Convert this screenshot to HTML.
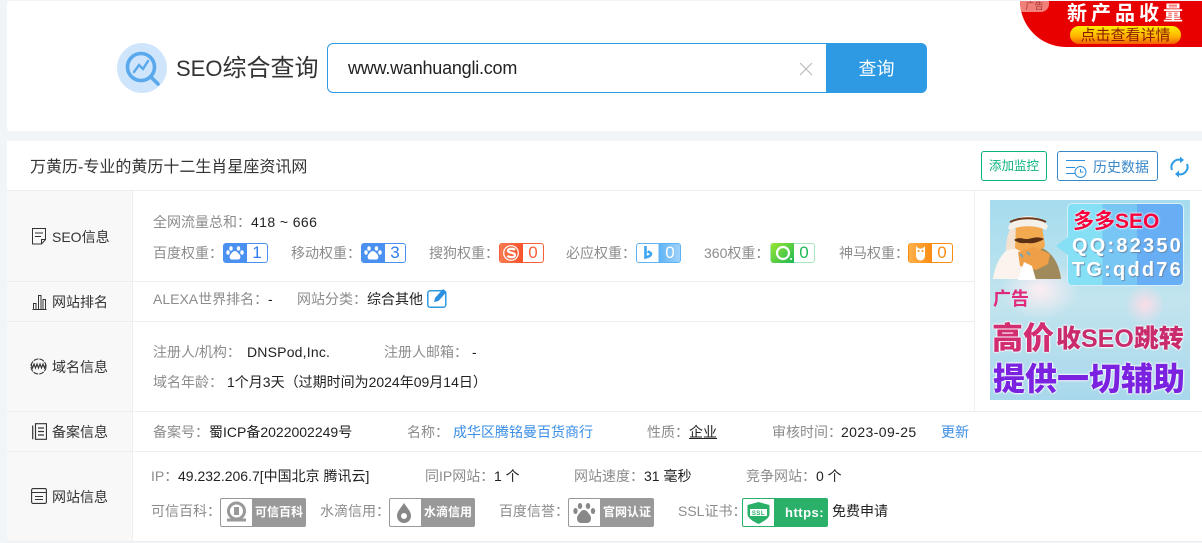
<!DOCTYPE html>
<html lang="zh-CN"><head><meta charset="utf-8"><title>SEO综合查询</title>
<style>
html,body{margin:0;padding:0;width:1202px;height:543px;overflow:hidden;background:#f1f5f8}
body{position:relative;font:14px/22px "Liberation Sans","Noto Sans CJK SC",sans-serif;color:#222}
div,span,svg{position:absolute;box-sizing:border-box}
span.n{position:static}
.t{white-space:nowrap;height:22px;line-height:22px}
.g{color:#8c8c8c}
.l{font-size:14px;color:#333}
.ln{background:#eee}
.bd{height:20px;width:45px;border:1px solid;border-radius:3px;background:#fff}
.bd b{position:absolute;left:0;top:-1px;height:20px;width:23px;border-radius:3px 0 0 3px}
.bd i{position:absolute;left:23px;right:0;top:-1px;text-align:center;font:normal 17px/20px "Liberation Sans",sans-serif}
.bd svg{left:0;top:-1px}
.gb{height:29px;width:86px;background:#999;border:1px solid #999;border-radius:2px;color:#fff;font-weight:bold;font-size:12px;line-height:27px;padding-left:34px;white-space:nowrap}
.gb b{position:absolute;left:0;top:0;width:31px;height:27px;background:#fff;border-radius:1px 0 0 1px}
.gb svg{left:0;top:0}
</style></head><body>

<div style="left:7px;top:1px;width:1195px;height:130px;background:#fff;border-radius:3px 0 0 3px"></div>
<div style="left:7px;top:141px;width:1195px;height:400px;background:#fff"></div>

<svg style="left:117px;top:43px" width="50" height="50" viewBox="0 0 50 50">
<circle cx="25" cy="25" r="25" fill="#cfe5fc"/>
<circle cx="24" cy="24" r="13.500" fill="none" stroke="#5aa9ec" stroke-width="3.600"/>
<path d="M34 34l7 7" stroke="#5aa9ec" stroke-width="3.600" stroke-linecap="round"/>
<path d="M17 29l5-7 4 4 5-8" fill="none" stroke="#5aa9ec" stroke-width="2.400" stroke-linecap="round"/>
</svg>
<div class="t" style="left:176px;top:54px;height:30px;line-height:30px;font-size:24px;color:#333"><span class="n" style="font-size:22px">SEO</span>综合查询</div>

<div style="left:327px;top:43px;width:500px;height:50px;border:1px solid #2d9ae3;border-radius:6px 0 0 6px;background:#fff"></div>
<div class="t" style="left:348px;top:56px;height:24px;line-height:24px;font-size:18px;letter-spacing:-.22px;color:#222">www.wanhuangli.com</div>
<svg style="left:799px;top:62px" width="14" height="14"><path d="M1 1l12 12M13 1L1 13" stroke="#bbb" stroke-width="1.200" fill="none"/></svg>
<div style="left:826px;top:43px;width:101px;height:50px;background:#2d9ae3;border-radius:0 6px 6px 0;color:#fff;font-size:18px;line-height:52px;text-align:center">查询</div>

<div style="left:1020px;top:1px;width:182px;height:46px;background:#e80000;border-radius:0 0 0 46px;overflow:hidden">
<div style="left:0;top:0;width:29px;height:11px;background:#f0817a;border-radius:0 0 8px 0;color:#a33;font-size:9px;line-height:11px;text-align:center">广告</div>
<div class="t" style="left:47px;top:1px;color:#fff;font-size:20px;font-weight:bold;line-height:25px;height:25px;letter-spacing:4px">新产品收量</div>
<div style="left:50px;top:25px;width:111px;height:18px;border-radius:9px;background:linear-gradient(#fff000,#ffb000 60%,#f06000);color:#8c1c00;font-size:15px;line-height:19px;text-align:center;white-space:nowrap">点击查看详情</div>
</div>

<div class="t" style="left:30px;top:156px;font-size:16px;line-height:24px;height:24px;color:#333">万黄历-专业的黄历十二生肖星座资讯网</div>
<div style="left:981px;top:151px;width:66px;height:30px;border:1px solid #0db37f;border-radius:3px;color:#0db37f;font-size:12.500px;line-height:29px;text-align:center;white-space:nowrap">添加监控</div>
<div style="left:1057px;top:151px;width:101px;height:30px;border:1px solid #3a87c8;border-radius:3px"></div>
<svg style="left:1065px;top:159px" width="22" height="20" fill="none" stroke="#2d8fdc" stroke-width="1"><path d="M1 1.500h19M1 8.500h9M1 14.500h9"/><circle cx="15.500" cy="13" r="5.500"/><path d="M15.500 10v3h3"/></svg>
<div class="t" style="left:1093px;top:156px;color:#3a87c8;font-size:14px">历史数据</div>
<svg style="left:1170px;top:156px" width="19" height="22" viewBox="0 0 19 22" fill="none" stroke="#2d9ae3" stroke-width="2"><path d="M2 14A7.500 7.500 0 0 1 11 4"/><path d="M17 8A7.500 7.500 0 0 1 8 18"/><path d="M10 0.500l4 3.500-4 3z" fill="#2d9ae3" stroke="none"/><path d="M9 14.500l-4 3.500 4 3.500z" fill="#2d9ae3" stroke="none"/></svg>

<div class="ln" style="left:7px;top:190px;width:1195px;height:1px"></div>
<div style="left:7px;top:191px;width:125px;height:350px;background:#f8f8f8"></div>
<div class="ln" style="left:132px;top:191px;width:1px;height:350px"></div>
<div class="ln" style="left:974px;top:191px;width:1px;height:220px"></div>
<div class="ln" style="left:7px;top:281px;width:967px;height:1px"></div>
<div class="ln" style="left:7px;top:321px;width:967px;height:1px"></div>
<div class="ln" style="left:7px;top:411px;width:1195px;height:1px"></div>
<div class="ln" style="left:7px;top:451px;width:1195px;height:1px"></div>
<div class="ln" style="left:7px;top:541px;width:1195px;height:1px"></div>

<svg style="left:32px;top:228px" width="15" height="17" fill="none" stroke="#333" stroke-width="1"><path d="M.5.500h13v11l-4 4.500h-9zM9.500 16v-4.500h4M3 5h8M3 8.500h6"/></svg>
<div class="t l" style="left:52px;top:226px">SEO信息</div>
<svg style="left:32px;top:294px" width="15" height="16" fill="none" stroke="#333" stroke-width="1"><path d="M.5 15.500h14M1.500 9.500h2.500v6H1.500zM6.500 1.500h2.500v14H6.500zM11 5.500h2.500v10H11z"/></svg>
<div class="t l" style="left:52px;top:291px">网站排名</div>
<svg style="left:30px;top:358px" width="17" height="17" fill="none" stroke="#333" stroke-width="1"><circle cx="8.500" cy="8.500" r="7.500" stroke-dasharray="5 1"/><path d="M1 6l1.500 4 1.500-4 1.500 4 1.500-4 1.500 4 1.500-4 1.500 4 1.500-4 1.500 4 1.500-4" stroke-width="1.100"/></svg>
<div class="t l" style="left:52px;top:356px">域名信息</div>
<svg style="left:32px;top:423px" width="15" height="17" fill="none" stroke="#333" stroke-width="1.200"><path d="M3.500.700h11v15.600h-11zM.7 2.500v13.800M6 5h6M6 8.500h6M6 12h6"/></svg>
<div class="t l" style="left:52px;top:421px">备案信息</div>
<svg style="left:31px;top:488px" width="16" height="16" fill="none" stroke="#333" stroke-width="1.100"><rect x=".6" y=".6" width="14.800" height="14.800" rx="1.500"/><path d="M.6 4.500h14.800M4 8.500h8M4 11.500h8"/></svg>
<div class="t l" style="left:52px;top:486px">网站信息</div>

<div class="t g" style="left:153px;top:211px">全网流量总和：</div>
<div class="t" style="left:251px;top:211px;letter-spacing:.4px">418 ~ 666</div>

<div class="t g" style="left:153px;top:242px">百度权重：</div>
<div class="bd" style="left:223px;top:243px;border-color:#4a90f0;color:#2f7cf0"><b style="background:#4a90f0"></b><svg width="23" height="20" fill="#fff"><ellipse cx="7" cy="5.500" rx="1.700" ry="2.200"/><ellipse cx="14.500" cy="5.500" rx="1.700" ry="2.200"/><ellipse cx="4" cy="9.500" rx="1.700" ry="2.200"/><ellipse cx="18" cy="9.500" rx="1.700" ry="2.200"/><path d="M10.800 8c-2 0-3 2-4.300 3.500-1.500 1.700-1 5 1.500 5h6c2.500 0 3-3.300 1.500-5C14 10 12.800 8 10.800 8z"/></svg><i>1</i></div>
<div class="t g" style="left:291px;top:242px">移动权重：</div>
<div class="bd" style="left:361px;top:243px;border-color:#4a90f0;color:#2f7cf0"><b style="background:#4a90f0"></b><svg width="23" height="20" fill="#fff"><ellipse cx="7" cy="5.500" rx="1.700" ry="2.200"/><ellipse cx="14.500" cy="5.500" rx="1.700" ry="2.200"/><ellipse cx="4" cy="9.500" rx="1.700" ry="2.200"/><ellipse cx="18" cy="9.500" rx="1.700" ry="2.200"/><path d="M10.800 8c-2 0-3 2-4.300 3.500-1.500 1.700-1 5 1.500 5h6c2.500 0 3-3.300 1.500-5C14 10 12.800 8 10.800 8z"/></svg><i>3</i></div>
<div class="t g" style="left:429px;top:242px">搜狗权重：</div>
<div class="bd" style="left:499px;top:243px;border-color:#f8603a;color:#f8603a"><b style="background:linear-gradient(90deg,#f97a50,#f8532c)"></b><svg width="23" height="20" fill="none" stroke="#fff"><circle cx="11" cy="10" r="7.300" stroke-width="1.200"/><path d="M15 7c-2-2-7-1.500-7 .8s7 1.500 7 4.200-5.500 2.800-7.500 .8" stroke-width="2.200"/></svg><i>0</i></div>
<div class="t g" style="left:566px;top:242px">必应权重：</div>
<div class="bd" style="left:636px;top:243px;border-color:#5db3f5;color:#fff;background:linear-gradient(90deg,#fff 50%,#5db3f5 50%,#9fd2fb)"><svg width="23" height="20" fill="none" stroke="#3ba5f0"><path d="M8.500 3v11.500c2-.5 5.500-1.500 5.500-3.500 0-1.500-2-2-3.500-2.500" stroke-width="2.600"/></svg><i>0</i></div>
<div class="t g" style="left:704px;top:242px">360权重：</div>
<div class="bd" style="left:770px;top:243px;border-color:#a5e6bd;color:#1cb957"><b style="background:linear-gradient(135deg,#9ce52e,#1cb957)"></b><svg width="23" height="20" fill="none" stroke="#fff"><circle cx="12" cy="10" r="6" stroke-width="2.200"/><circle cx="20" cy="16" r="1" fill="#fff" stroke="none"/></svg><i>0</i></div>
<div class="t g" style="left:839px;top:242px">神马权重：</div>
<div class="bd" style="left:908px;top:243px;border-color:#fb8c12;color:#fb8c12"><b style="background:linear-gradient(90deg,#ffb04a,#fb8c12)"></b><svg width="23" height="20" fill="#fff"><path d="M7 3l2.500 2.500h4L16 3v9.500c0 3-2 5-4.500 5S7 15.500 7 12.500z"/><circle cx="9.500" cy="8" r="1" fill="#fb8c12"/><circle cx="13.500" cy="8" r="1" fill="#fb8c12"/></svg><i>0</i></div>

<div class="t g" style="left:153px;top:288px">ALEXA世界排名：</div>
<div class="t" style="left:268px;top:288px">-</div>
<div class="t g" style="left:297px;top:288px">网站分类：</div>
<div class="t" style="left:367px;top:288px">综合其他</div>
<svg style="left:427px;top:288px" width="21" height="20" fill="none"><rect x=".8" y="2.800" width="18" height="16.400" rx="2.500" stroke="#2d9ae3" stroke-width="1.500"/><path d="M7 14l1-4 8-9 3.500 3-8 9z" fill="#2d8fe0"/></svg>

<div class="t g" style="left:153px;top:341px">注册人/机构：</div>
<div class="t" style="left:247px;top:341px;letter-spacing:.2px">DNSPod,Inc.</div>
<div class="t g" style="left:384px;top:341px">注册人邮箱：</div>
<div class="t" style="left:472px;top:341px">-</div>
<div class="t g" style="left:153px;top:371px">域名年龄：</div>
<div class="t" style="left:227px;top:371px">1个月3天（过期时间为2024年09月14日）</div>

<div class="t g" style="left:153px;top:421px">备案号：</div>
<div class="t" style="left:209px;top:421px">蜀ICP备2022002249号</div>
<div class="t g" style="left:407px;top:421px">名称：</div>
<div class="t" style="left:453px;top:421px;color:#3a8ee6">成华区腾铭曼百货商行</div>
<div class="t g" style="left:647px;top:421px">性质：</div>
<div class="t" style="left:689px;top:421px;text-decoration:underline">企业</div>
<div class="t g" style="left:772px;top:421px">审核时间：</div>
<div class="t" style="left:841px;top:421px;letter-spacing:.4px">2023-09-25</div>
<div class="t" style="left:941px;top:421px;color:#3a8ee6">更新</div>

<div class="t g" style="left:151px;top:465px">IP：</div>
<div class="t" style="left:178px;top:465px">49.232.206.7[中国北京 腾讯云]</div>
<div class="t g" style="left:425px;top:465px">同IP网站：</div>
<div class="t" style="left:494px;top:465px">1 个</div>
<div class="t g" style="left:574px;top:465px">网站速度：</div>
<div class="t" style="left:644px;top:465px">31 毫秒</div>
<div class="t g" style="left:746px;top:465px">竞争网站：</div>
<div class="t" style="left:816px;top:465px">0 个</div>

<div class="t g" style="left:151px;top:500px">可信百科：</div>
<div class="gb" style="left:220px;top:498px"><b></b><svg width="31" height="27" fill="none" stroke="#999"><circle cx="15.500" cy="12" r="8" stroke-width="3"/><rect x="13" y="8" width="5" height="8" fill="#999" stroke="none"/><path d="M6 21h19" stroke-width="3"/></svg>可信百科</div>
<div class="t g" style="left:320px;top:500px">水滴信用：</div>
<div class="gb" style="left:389px;top:498px"><b></b><svg width="31" height="27"><path d="M14 4c-3 5-7 8-7 13a7 7 0 0 0 14 0c0-5-4-8-7-13z" fill="#888"/><circle cx="14" cy="17" r="3" fill="#fff"/></svg>水滴信用</div>
<div class="t g" style="left:499px;top:500px">百度信誉：</div>
<div class="gb" style="left:568px;top:498px"><b></b><svg width="31" height="27" fill="#888"><ellipse cx="11" cy="7" rx="2.200" ry="3"/><ellipse cx="19" cy="7" rx="2.200" ry="3"/><ellipse cx="6.500" cy="12" rx="2.200" ry="3"/><ellipse cx="24" cy="12" rx="2.200" ry="3"/><path d="M15 11c-3 0-4 3-6 5-2 3-1 8 3 8h6c4 0 5-5 3-8-2-2-3-5-6-5z"/></svg>官网认证</div>
<div class="t g" style="left:678px;top:500px">SSL证书：</div>
<div class="gb" style="left:742px;top:498px;background:#2bb06a;border-color:#2bb06a;padding-left:42px;letter-spacing:.5px;font-size:13px"><b></b><svg width="31" height="27"><path d="M15.500 3l11 3v9c0 4-5 7-11 10-6-3-11-6-11-10V6z" fill="#2bb06a"/><rect x="7" y="10" width="17" height="7" fill="#fff"/><text x="15.500" y="16" text-anchor="middle" font-size="6" font-weight="bold" fill="#2bb06a" font-family="Liberation Sans">SSL</text></svg>https:</div>
<div class="t" style="left:832px;top:500px">免费申请</div>

<div style="left:990px;top:200px;width:200px;height:200px;overflow:hidden;background:linear-gradient(#a5dcee,#c2e4ee 50%,#a8d8ec)">
<div style="left:10px;top:60px;width:80px;height:60px;border-radius:50%;background:radial-gradient(#fdeef2,rgba(253,238,242,0) 70%)"></div>
<div style="left:135px;top:85px;width:40px;height:40px;border-radius:50%;background:radial-gradient(#fbdde8,rgba(251,221,232,0) 70%)"></div>
<svg style="left:0;top:0" width="200" height="200">
<path d="M3 79c2-14 8-26 18-32l20 2v30z" fill="#fbf3ee"/>
<path d="M40 79V50l10-3c10 4 19 14 21 32z" fill="#a08a5c"/>
<path d="M16 50c0-12 3-20 7-26l10 24z" fill="#f3e2d2"/>
<path d="M26 26c6-6 20-6 26 0l3 20c-3 6-24 8-30 2z" fill="#f2a950"/>
<path d="M18 28c2-8 12-12 20-12s16 4 20 10l-2 4c-10-5-26-5-36 0z" fill="#f6f0ea"/>
<path d="M20 22c10-5 26-5 36 0" stroke="#6b3a1a" stroke-width="2" fill="none"/>
<path d="M24 40c6-4 10 0 14-1 5-1 10-3 16 0-5 3-11 5-16 4-4 0-8 1-14-3z" fill="#5a2f14"/>
<path d="M28 52l16-5 16 7-2 10-12 6-16-4z" fill="#ef9f48"/>
<path d="M34 62l8 4 4 14H28z" fill="#fff"/>
<path d="M30 54l3 3M37 52l3 3" stroke="#6aa8c0" stroke-width="2"/>
</svg>
<div style="left:77px;top:3px;width:117px;height:83px;border-radius:5px;background:linear-gradient(90deg,#85dff5 0,#85dff5 30%,#78c6f4 30%,#78c6f4 60%,#68aef5 60%);border:1px solid #d5f0fa"></div>
<svg style="left:66px;top:36px" width="13" height="20"><path d="M12 1L0 10l12 9z" fill="#85dff5"/></svg>
<div class="t" style="left:83px;top:8px;height:28px;line-height:28px;font-size:21px;font-weight:bold;color:#f8003c;text-shadow:0 0 2px #fff,0 0 2px #fff">多多SEO</div>
<div class="t" style="left:82px;top:32px;height:28px;line-height:28px;font-size:20px;font-weight:bold;color:#fff;letter-spacing:2.200px;text-shadow:1px 1px 1px #68a">QQ:82350</div>
<div class="t" style="left:82px;top:56px;height:28px;line-height:28px;font-size:20px;font-weight:bold;color:#fff;letter-spacing:2.200px;text-shadow:1px 1px 1px #68a">TG:qdd76</div>
<div class="t" style="left:3px;top:87px;height:24px;line-height:24px;font-size:18px;font-weight:bold;color:#e0287c">广告</div>
<div class="t" style="left:2px;top:119px;height:40px;line-height:40px;font-size:31px;font-weight:900;color:#d22d70;text-shadow:0 0 2px #fff,0 0 2px #fff,0 0 2px #fff">高价</div>
<div class="t" style="left:66px;top:123px;height:32px;line-height:32px;font-size:25px;font-weight:900;color:#c92c6c;text-shadow:0 0 2px #fff,0 0 2px #fff,0 0 2px #fff">收SEO跳转</div>
<div class="t" style="left:3px;top:160px;height:38px;line-height:38px;font-size:32px;font-weight:900;color:#7a22e0;text-shadow:0 0 2px #fff,0 0 2px #fff,0 0 2px #fff">提供一切辅助</div>
</div>
</body></html>
